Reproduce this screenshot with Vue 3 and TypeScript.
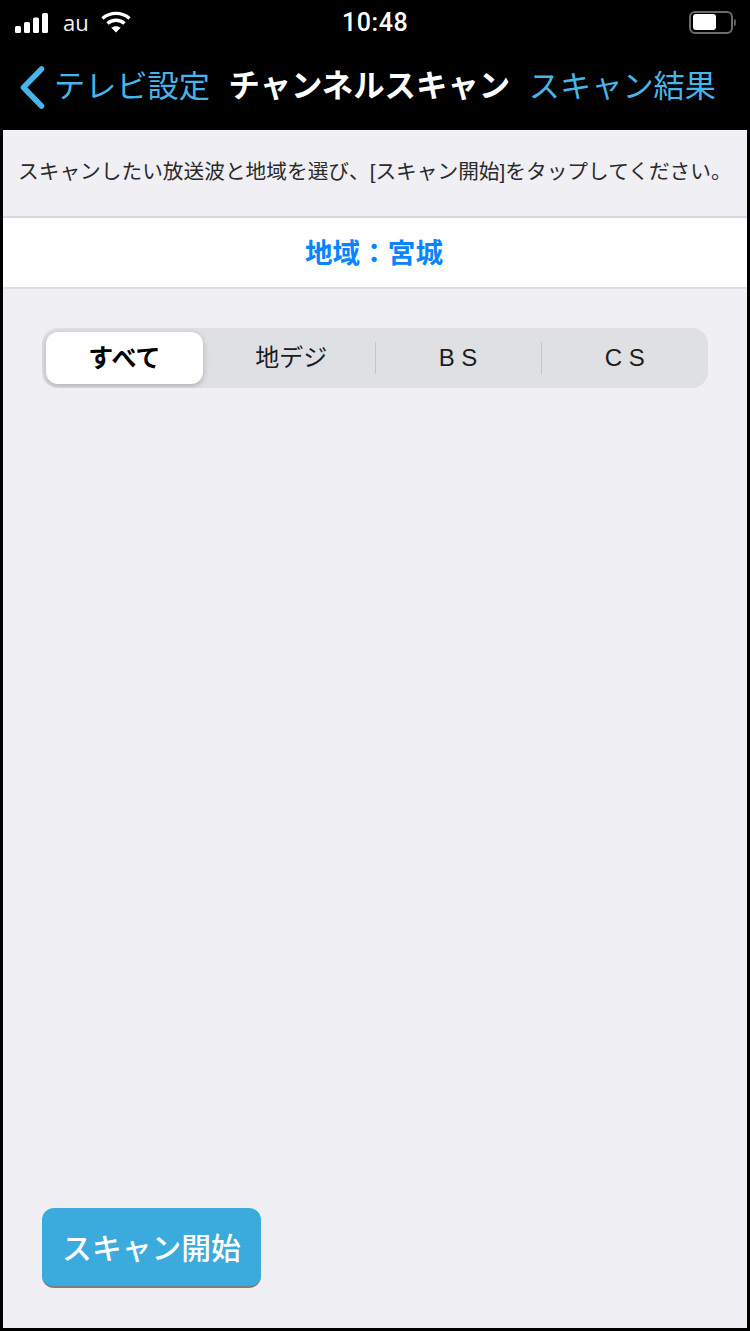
<script setup lang="ts">
const segments: string[] = ['すべて', '地デジ', 'B S', 'C S']
</script>

<template>
  <div class="page">
    <header class="top">
      <div class="status">
        <div class="status-left">
          <svg class="signal" width="34" height="22" viewBox="0 0 34 22" fill="#fff">
            <rect x="0" y="14" width="6" height="7" rx="1.5" />
            <rect x="9" y="10" width="6" height="11" rx="1.5" />
            <rect x="18" y="5.500" width="6" height="15.500" rx="1.500" />
            <rect x="27" y="1" width="6" height="20" rx="1.500" />
          </svg>
          <span class="carrier">au</span>
          <svg class="wifi" width="30" height="22" viewBox="0 0 30 22" fill="none" stroke="#fff" stroke-width="3.400">
            <path d="M1.500 7.500C9 .7 21 .7 28.500 7.500" />
            <path d="M6.500 12.500C11.300 8.200 18.700 8.200 23.500 12.500" />
            <path d="M15 21.500 10.300 16.800C13 14.700 17 14.700 19.700 16.800Z" fill="#fff" stroke="none" />
          </svg>
        </div>
        <div class="clock">10:48</div>
        <div class="battery"><div class="battery-body"><div class="battery-fill"></div></div><div class="battery-cap"></div></div>
      </div>
      <nav class="nav">
        <div class="back">
          <svg class="chevron" width="28" height="44" viewBox="0 0 28 44" fill="none" stroke="#46b5ea" stroke-width="5.500" stroke-linecap="round" stroke-linejoin="round">
            <path d="M22.500 4 4.500 22.500 22.500 41" />
          </svg>
          <span class="link">テレビ設定</span>
        </div>
        <span class="title">チャンネルスキャン</span>
        <span class="link">スキャン結果</span>
      </nav>
    </header>
    <main class="content">
      <p class="hint">スキャンしたい放送波と地域を選び、[スキャン開始]をタップしてください。</p>
      <div class="region">地域：宮城</div>
      <div class="segment-wrap">
        <div class="segments">
          <div v-for="(s, i) in segments" :key="s" class="segment" :class="{ active: i === 0, divided: i > 1 }">{{ s }}</div>
        </div>
      </div>
      <div class="spacer"></div>
      <div class="actions"><button class="scan" type="button">スキャン開始</button></div>
    </main>
  </div>
</template>

<style>
html, body { margin: 0; background: #000; }
</style>

<style scoped>
.page {
  width: 750px;
  height: 1331px;
  box-sizing: border-box;
  padding: 0 3px 3px 3px;
  background: #000;
  display: flex;
  flex-direction: column;
  font-family: "Liberation Sans", "Noto Sans CJK JP", sans-serif;
}
.top { height: 129px; flex: none; color: #fff; margin: 0 -3px; }
.status {
  height: 44px;
  display: flex;
  align-items: center;
  justify-content: space-between;
  padding: 0 14px 0 15px;
  position: relative;
}
.status-left { display: flex; align-items: center; width: 200px; }
.signal { margin-top: 1px; }
.carrier { font: 400 22px "Open Sans", "Liberation Sans", sans-serif; margin-left: 14px; color: #f2f2f2; }
.wifi { margin-left: 12px; }
.clock {
  position: absolute;
  left: 342px;
  top: 8px;
  font: 500 25px "Roboto", "Liberation Sans", sans-serif;
  letter-spacing: .6px;
}
.battery { display: flex; align-items: center; gap: 1px; }
.battery-body {
  border: 2px solid #6b6b6b;
  border-radius: 6px;
  padding: 1.500px;
  box-sizing: border-box;
  width: 44px;
  height: 23px;
}
.battery-fill { width: 23px; height: 16px; background: #fff; border-radius: 3px; }
.battery-cap { width: 2px; height: 7px; background: #5a5a5a; border-radius: 0 2px 2px 0; }
.nav {
  height: 85px;
  display: flex;
  align-items: center;
  padding: 0 34px 0 19px;
  justify-content: space-between;
}
.back { display: flex; align-items: center; gap: 7px; }
.chevron { flex: none; }
.link { color: #46b5ea; font-size: 31.200px; font-weight: 400; line-height: 44px; }
.title { color: #fff; font-size: 31.400px; font-weight: 700; line-height: 44px; }
.content {
  flex: 1;
  background: #efeff4;
  display: flex;
  flex-direction: column;
  margin: 1px 0 0;
}
.hint {
  margin: 0;
  height: 86px;
  box-sizing: border-box;
  padding: 0 0 0 15px;
  font-size: 20.700px;
  line-height: 84px;
  color: #2b2b2b;
  white-space: nowrap;
  font-weight: 400;
}
.region {
  height: 73px;
  box-sizing: border-box;
  background: #fff;
  border-top: 2px solid #d9d9dc;
  border-bottom: 2px solid #dfdfe2;
  text-align: center;
  color: #0a84ff;
  font-size: 27.600px;
  font-weight: 700;
  line-height: 72px;
  padding-right: 2px;
}
.segment-wrap { padding: 39px 39px 0; }
.segments {
  height: 60px;
  box-sizing: border-box;
  padding: 4px 0 4px 4px;
  background: #dfe0e4;
  border-radius: 16px;
  display: grid;
  grid-template-columns: 162px 1fr 1fr 1fr;
  align-items: stretch;
  overflow: hidden;
}
.segment {
  display: flex;
  align-items: center;
  justify-content: center;
  font-size: 24px;
  line-height: 50px;
  padding-bottom: 1px;
  color: #1c1c1e;
  position: relative;
}
.segment.active {
  background: #fff;
  border-radius: 12px;
  margin-right: 5px;
  padding-bottom: 0;
  font-size: 25px;
  font-weight: 700;
  color: #000;
  box-shadow: 0 2px 6px rgba(0, 0, 0, .22);
}
.segment.divided::before {
  content: "";
  position: absolute;
  left: 0;
  top: 10px;
  bottom: 10px;
  width: 1px;
  background: #c6c6ca;
}
.spacer { flex: 1; }
.actions { padding: 0 39px 40px; }
.scan {
  display: block;
  width: 219px;
  height: 80px;
  border: 0;
  border-radius: 12px;
  background: #3babdd;
  border-bottom: 2px solid #7d7d7d;
  color: #fff;
  font-family: inherit;
  font-size: 29.800px;
  font-weight: 500;
  padding: 0 0 3px;
}
</style>
